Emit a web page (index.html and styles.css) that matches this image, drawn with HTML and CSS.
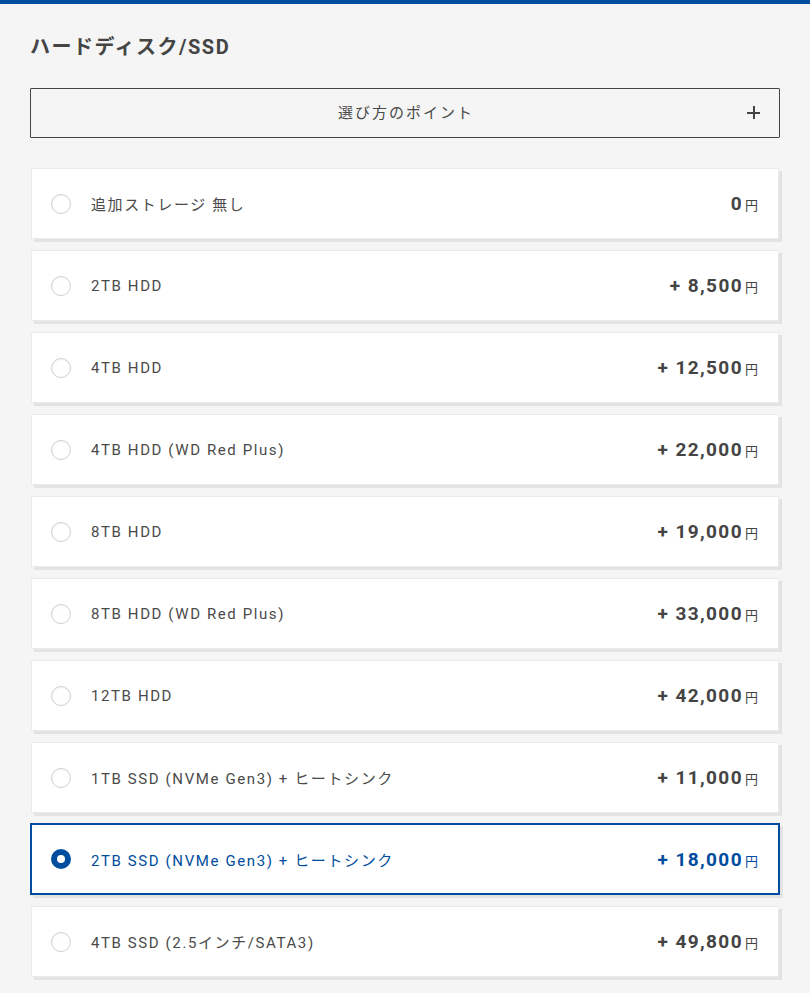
FILE: index.html
```html
<!DOCTYPE html>
<html lang="ja">
<head>
<meta charset="utf-8">
<link rel="stylesheet" href="styles.css">
</head>
<body>
<div class="topbar"></div>
<main class="section">
  <h2 class="title">ハードディスク/SSD</h2>
  <button class="guide"><span class="guide-text">選び方のポイント</span><span class="plus"></span></button>
  <ul class="options">
    <li class="option"><span class="radio"></span><span class="label">追加ストレージ 無し</span><span class="price">0<small>円</small></span></li>
    <li class="option"><span class="radio"></span><span class="label">2TB HDD</span><span class="price">+ 8,500<small>円</small></span></li>
    <li class="option"><span class="radio"></span><span class="label">4TB HDD</span><span class="price">+ 12,500<small>円</small></span></li>
    <li class="option"><span class="radio"></span><span class="label">4TB HDD (WD Red Plus)</span><span class="price">+ 22,000<small>円</small></span></li>
    <li class="option"><span class="radio"></span><span class="label">8TB HDD</span><span class="price">+ 19,000<small>円</small></span></li>
    <li class="option"><span class="radio"></span><span class="label">8TB HDD (WD Red Plus)</span><span class="price">+ 33,000<small>円</small></span></li>
    <li class="option"><span class="radio"></span><span class="label">12TB HDD</span><span class="price">+ 42,000<small>円</small></span></li>
    <li class="option"><span class="radio"></span><span class="label">1TB SSD (NVMe Gen3) + ヒートシンク</span><span class="price">+ 11,000<small>円</small></span></li>
    <li class="option selected"><span class="radio"></span><span class="label">2TB SSD (NVMe Gen3) + ヒートシンク</span><span class="price">+ 18,000<small>円</small></span></li>
    <li class="option"><span class="radio"></span><span class="label">4TB SSD (2.5インチ/SATA3)</span><span class="price">+ 49,800<small>円</small></span></li>
  </ul>
</main>
</body>
</html>
```
FILE: styles.css
```css
* { box-sizing: border-box; }
html, body { margin: 0; padding: 0; }
body {
  background: #f5f5f5;
  font-family: Roboto, "Noto Sans CJK JP", sans-serif;
  color: #444;
  width: 810px;
  height: 993px;
  overflow: hidden;
}
.topbar {
  height: 4px;
  background: #004c9e;
}
.section {
  padding: 0 30px;
}
.title {
  margin: 0;
  padding-top: 32px;
  height: 84px;
  font-size: 20px;
  font-weight: 700;
  letter-spacing: 1.5px;
  line-height: 22px;
  color: #444;
}
.guide {
  display: flex;
  align-items: center;
  justify-content: center;
  position: relative;
  width: 750px;
  height: 50px;
  border: 1px solid #444;
  border-radius: 1px;
  background: #f5f5f5;
  font-family: Roboto, "Noto Sans CJK JP", sans-serif;
  font-size: 15px;
  letter-spacing: 2px;
  color: #4a4a4a;
  padding: 0 0 4px;
  cursor: pointer;
}
.guide-text { padding-left: 2px; }
.plus {
  position: absolute;
  right: 19px;
  top: 17px;
  width: 13px;
  height: 13px;
}
.plus::before, .plus::after {
  content: "";
  position: absolute;
  background: #444;
}
.plus::before { left: 0; top: 5.5px; width: 13px; height: 2px; }
.plus::after { left: 5.5px; top: 0; width: 2px; height: 13px; }
.options {
  list-style: none;
  margin: 30px 0 0;
  padding: 0;
  display: flex;
  flex-direction: column;
  gap: 11px;
}
.option {
  display: flex;
  align-items: center;
  height: 71px;
  margin-left: 1px;
  width: 748px;
  background: #fff;
  border: 1px solid #ebebeb;
  box-shadow: 3px 3px 0 #e3e3e3;
  padding: 0 20px 0 19px;
}
.radio {
  width: 20px;
  height: 20px;
  border-radius: 50%;
  border: 1px solid #cfcfcf;
  background: radial-gradient(circle at 60% 65%, #fff 55%, #eee 100%);
  flex: none;
  margin-right: 20px;
}
.label {
  flex: 1;
  font-size: 15px;
  letter-spacing: 1.6px;
  color: #4a4a4a;
}
.price {
  font-size: 19px;
  font-weight: 700;
  letter-spacing: 1.4px;
  color: #444;
  display: flex;
  align-items: baseline;
}
.price small {
  font-size: 13px;
  font-weight: 400;
  margin-left: 2px;
  letter-spacing: 0;
}
.option.selected {
  border: 2px solid #004c9e;
  margin: -1px 0 0;
  width: 750px;
  height: 72px;
  padding-left: 19px;
}
.option.selected .radio {
  border: 6px solid #004c9e;
  background: #fff;
}
.option.selected .label,
.option.selected .price { color: #004c9e; }
```
